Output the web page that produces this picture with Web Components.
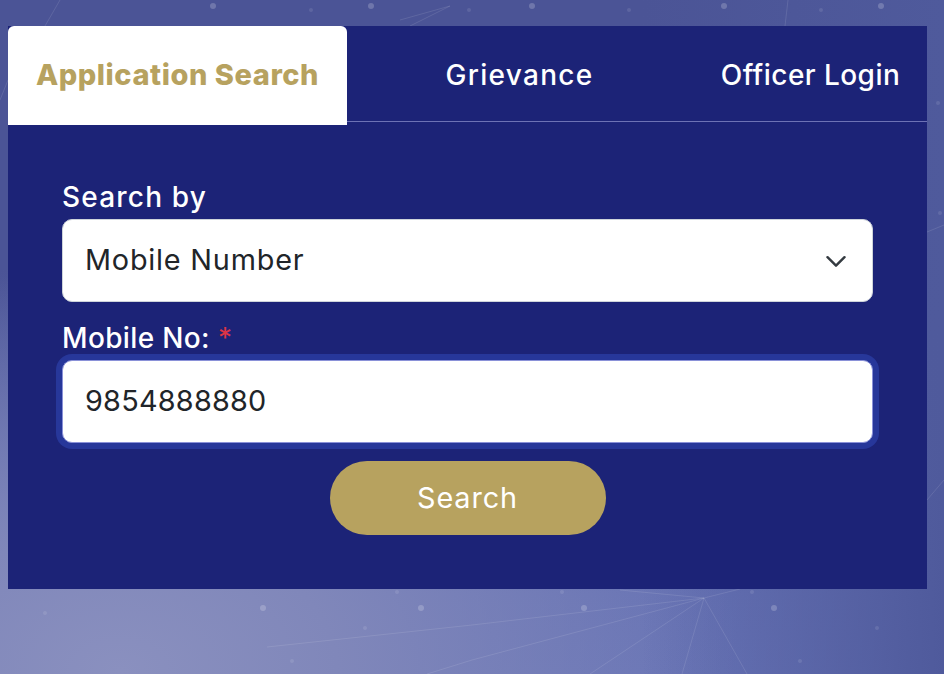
<!DOCTYPE html>
<html lang="en">
<head>
<meta charset="utf-8">
<title>Application Search</title>
<style>
  html, body { margin: 0; height: 100%; }
  body { font-family: Inter, "Liberation Sans", sans-serif; overflow: hidden; }
</style>
</head>
<body>
<network-page>
  <search-card>
    <tab-button slot="tabs" active style="width:339px;--ls:.55px">Application Search</tab-button>
    <tab-button slot="tabs" style="width:345px;--ls:1.3px">Grievance</tab-button>
    <tab-button slot="tabs" style="width:235px;--ls:.45px;padding-left:2px">Officer Login</tab-button>
    <form-field label="Search by" style="--ls:1.2px">
      <select-box value="Mobile Number"></select-box>
    </form-field>
    <form-field label="Mobile No:" required style="--ls:.35px">
      <text-box value="9854888880"></text-box>
    </form-field>
    <gold-button>Search</gold-button>
  </search-card>
</network-page>

<script>
// fondo con puntos y lineas
const bigDots = [[213,6],[371,6],[532,6],[724,6],[881,6],[263,608],[421,608],[584,608],[774,608]];
const smallDots = [[311,10],[469,10],[629,10],[821,10],[45,613],[397,592],[365,628],[292,661],[752,592],[562,592],[877,628],[800,661],[940,213],[938,103]];
const lines = [
  [704,598,472,625],[472,625,267,647],[704,598,472,660],[472,660,427,674],[704,598,590,674],[704,598,682,674],[704,598,747,674],
  [704,598,620,590],[704,598,740,589],
  [410,26,450,6],[450,6,400,20],[785,26,788,0],[0,100,8,80],[927,232,944,225],[927,500,944,480],[60,0,45,26]
];

class NetworkPage extends HTMLElement {
  connectedCallback() {
    const shadow = this.attachShadow({ mode: "open" });
    const big = bigDots.map(([x, y]) => `<circle cx="${x}" cy="${y}" r="3" fill="#fff" opacity=".2"/>`).join("");
    const small = smallDots.map(([x, y]) => `<circle cx="${x}" cy="${y}" r="2" fill="#fff" opacity=".1"/>`).join("");
    const lineMarkup = lines.map(([a, b, c, d]) => `<line x1="${a}" y1="${b}" x2="${c}" y2="${d}" stroke="#fff" stroke-width="1" opacity=".1"/>`).join("");
    shadow.innerHTML = `
      <style>
        :host {
          display: block; position: relative; box-sizing: border-box;
          width: 944px; height: 674px; padding: 26px 17px 0 8px;
          background:
            radial-gradient(ellipse 620px 400px at 120px 670px, #8a90bf 0%, #8087ba 35%, rgba(107,117,180,0) 100%),
            linear-gradient(180deg, #4b5496 0%, #4b5496 40%, #6672b4 88%, #6874b6 100%);
        }
        .fade { position: absolute; inset: 0; background: linear-gradient(270deg, #4f5a9c 0%, rgba(79,90,156,0) 32%); }
        svg { position: absolute; left: 0; top: 0; }
        .content { position: relative; }
      </style>
      <div class="fade"></div>
      <svg width="944" height="674" aria-hidden="true">${lineMarkup}${big}${small}</svg>
      <div class="content"><slot></slot></div>`;
  }
}

class SearchCard extends HTMLElement {
  connectedCallback() {
    const shadow = this.attachShadow({ mode: "open" });
    shadow.innerHTML = `
      <style>
        :host { display: block; width: 919px; height: 563px; background: #1c2377; color: #fff; }
        .tabs { display: flex; height: 95px; border-bottom: 1px solid #6d72b5; }
        .panel { display: flex; flex-direction: column; padding: 55px 54px 0; }
      </style>
      <div class="tabs"><slot name="tabs"></slot></div>
      <div class="panel"><slot></slot></div>`;
  }
}

class TabButton extends HTMLElement {
  connectedCallback() {
    const shadow = this.attachShadow({ mode: "open" });
    shadow.innerHTML = `
      <style>
        :host {
          display: flex; align-items: center; justify-content: center; box-sizing: border-box;
          height: 99px; padding-bottom: 2px; font-size: 28px; letter-spacing: var(--ls, 0); font-weight: 500; color: #fff; flex: none;
        }
        :host([active]) { background: #fff; color: #b7a25f; font-size: 29px; font-weight: 800; border-radius: 6px 6px 0 0; }
      </style>
      <slot></slot>`;
  }
}

class FormField extends HTMLElement {
  connectedCallback() {
    const shadow = this.attachShadow({ mode: "open" });
    const star = this.hasAttribute("required") ? `<span class="star">*</span>` : "";
    shadow.innerHTML = `
      <style>
        :host { display: block; margin-bottom: 16px; }
        label { display: block; height: 42px; line-height: 40px; font-size: 28px; font-weight: 500; letter-spacing: var(--ls, 0); white-space: pre; }
        .star { color: #dc3545; margin-left: 8px; font-weight: 400; }
      </style>
      <label>${this.getAttribute("label")}${star}</label>
      <slot></slot>`;
  }
}

class SelectBox extends HTMLElement {
  connectedCallback() {
    const shadow = this.attachShadow({ mode: "open" });
    shadow.innerHTML = `
      <style>
        :host {
          display: flex; align-items: center; justify-content: space-between; box-sizing: border-box;
          height: 83px; padding: 0 26px 2px 22px; background: #fff; border: 1px solid #ced4da; border-radius: 10px;
          color: #212529; font-size: 28.8px; letter-spacing: .8px;
        }
        svg { display: block; margin-top: 3px; }
      </style>
      <span>${this.getAttribute("value")}</span>
      <svg width="20" height="13" viewBox="0 0 20 13" aria-hidden="true"><path d="M1.5 2.2L10 10.7l8.5-8.5" fill="none" stroke="#343a40" stroke-width="2.4" stroke-linecap="round" stroke-linejoin="round"/></svg>`;
  }
}

class TextBox extends HTMLElement {
  connectedCallback() {
    const shadow = this.attachShadow({ mode: "open" });
    shadow.innerHTML = `
      <style>
        :host {
          display: flex; align-items: center; box-sizing: border-box;
          height: 83px; padding: 0 22px 2px; background: #fff; border: 1px solid #8a91d8; border-radius: 10px;
          box-shadow: 0 0 0 6px #27379a; color: #212529; font-size: 28.8px; letter-spacing: .25px;
        }
      </style>
      <span>${this.getAttribute("value")}</span>`;
  }
}

class GoldButton extends HTMLElement {
  connectedCallback() {
    const shadow = this.attachShadow({ mode: "open" });
    shadow.innerHTML = `
      <style>
        :host {
          display: flex; align-items: center; justify-content: center; box-sizing: border-box;
          width: 276px; height: 74px; margin: 2px auto 0; padding-bottom: 2px; background: #b7a25f; border-radius: 37px;
          color: #fff; font-size: 28.8px; letter-spacing: .9px;
        }
      </style>
      <slot></slot>`;
  }
}

customElements.define("network-page", NetworkPage);
customElements.define("search-card", SearchCard);
customElements.define("tab-button", TabButton);
customElements.define("form-field", FormField);
customElements.define("select-box", SelectBox);
customElements.define("text-box", TextBox);
customElements.define("gold-button", GoldButton);
</script>
</body>
</html>
